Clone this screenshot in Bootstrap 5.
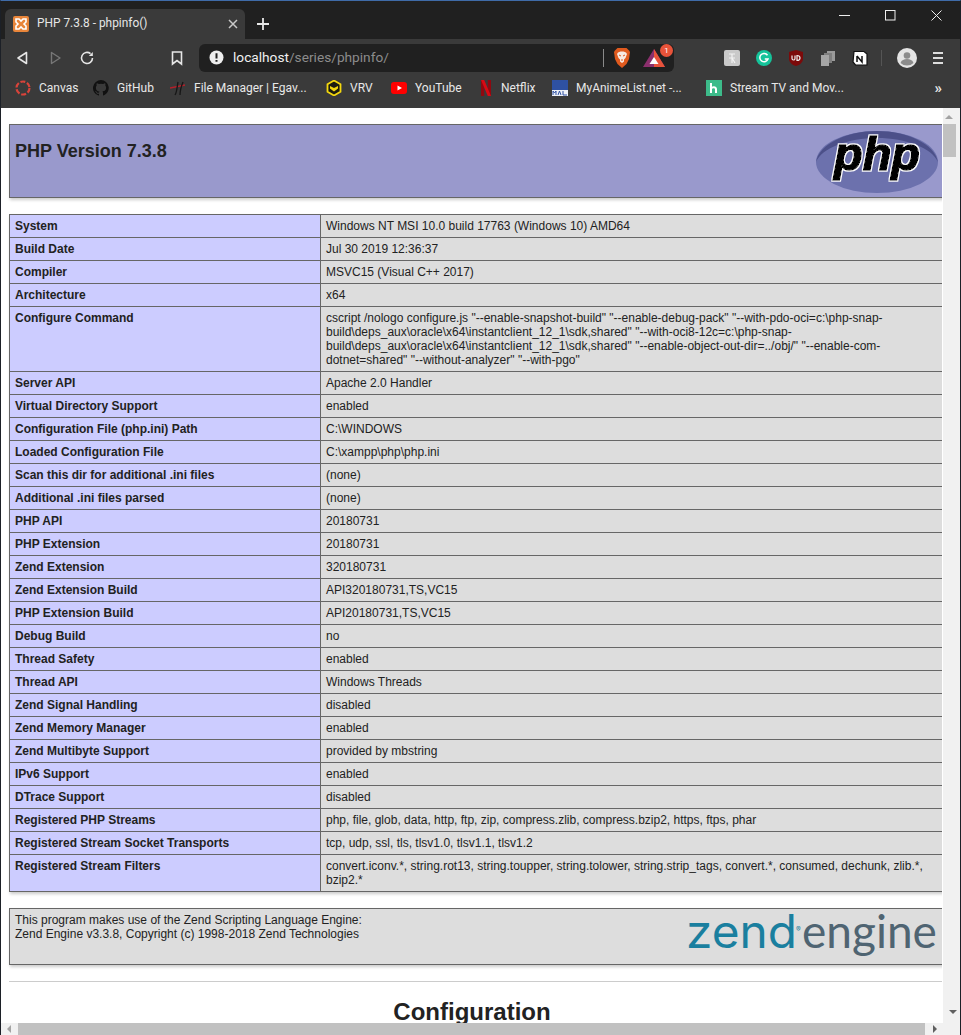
<!DOCTYPE html>
<html lang="en"><head><meta charset="utf-8"><title>PHP 7.3.8 - phpinfo()</title>
<link rel="stylesheet" href="https://cdn.jsdelivr.net/npm/bootstrap@5.3.0/dist/css/bootstrap.min.css">
<style>
html,body{height:1035px;overflow:hidden;margin:0;background:#fff}
.win{height:1035px;width:961px;border-top:1px solid #3f6ba8;border-left:1px solid #1c2027;border-right:1px solid #1c2027;font-family:Roboto,"Open Sans",sans-serif}
.tabstrip{height:38px;background:#202020;padding-left:4px}
.tab{width:240px;height:30px;background:#3a3a3a;border-radius:6px 6px 0 0;padding:0 7px 0 8px;color:#e6e6e6;font-size:11.9px}
.tabtitle{margin-left:8px}
.tabclose{margin-left:auto}
.plus{margin-left:11px;margin-top:8px}
.wctl{margin-left:auto;margin-right:1px;padding-bottom:12px}
.wbtn{width:46px;text-align:center}
.toolbar{height:33px;background:#3a3a3a;padding-top:4px}
.navbtn{width:32px}
.navfirst{margin-left:14px}
.bmk{margin-left:58px;width:16px}
.addr{width:475px;height:28px;margin-left:14px;background:#202020;border-radius:6px;color:#ddd;font-size:13.7px;padding-left:10px;padding-right:6px}
.addr b{font-weight:400;color:#f0f0f0;margin-left:9px}
.addr i{font-style:normal;color:#8c8c8c}
.vsep{width:1px;height:18px;background:#8a8a8a}
.asep{margin-left:auto;margin-right:10px}
.bat{margin-left:13px;margin-right:3px;position:relative;line-height:0}
.dot{position:absolute;top:-4px;right:-8px;width:13px;height:13px;border-radius:50%;background:#e8533a;color:#fff;font-size:8px;line-height:13px;text-align:center}
.exts{margin-left:50px;gap:16px}
.exts2{margin-left:13px;gap:15px}
.tsep{background:#555;height:16px}
.bookmarks{height:36px;background:#3a3a3a;padding-left:14px;color:#e8e8e8;font-size:12px;padding-bottom:4px}
.bm{gap:8px;white-space:nowrap}
.bm:nth-child(1){width:78px}
.bm:nth-child(2){width:77px}
.bm:nth-child(3){width:156px}
.bm:nth-child(4){width:65px}
.bm:nth-child(5){width:88px}
.bm:nth-child(6){width:73px}
.bm:nth-child(7){width:154px}
.more{margin-left:auto;margin-right:18px;font-size:15px;font-weight:700}
.pane{height:927px}
.pagewrap{width:942px;overflow:hidden;padding-top:16px;color:#222;font-family:"Liberation Sans",Arial,sans-serif;font-size:12px;line-height:normal}
.gutter{width:1px;background:#fff}
.vbar{width:17px;background:#f1f1f1;padding-top:7px}
.upa{width:0;height:0;border:4px solid transparent;border-top:0;border-bottom-color:#a3a3a3;margin:0 0 5px 2px}
.thumb{width:13px;height:33px;background:#c1c1c1}
.infotable{width:936px;margin-left:8px;border-collapse:collapse;box-shadow:1px 2px 3px #ccc;margin-bottom:16px;table-layout:fixed}
.infotable td{border:1px solid #666;padding:4px 5px;vertical-align:baseline;font-size:12px;line-height:14px;overflow-wrap:break-word}
.infotable .ecell{width:311px;background:#ccf;font-weight:700}
.infotable .vcell{background:#ddd}
.infotable .hcell{background:#99c;height:73px;vertical-align:top;padding:4px 5px;position:relative}
.infotable .zcell{background:#ddd;height:56px;vertical-align:top;position:relative}
.ptitle{font-size:18px;font-weight:700;line-height:21px;margin:12px 0;color:#222}
.phplogo{position:absolute;right:3px;top:-5px}
.zendlogo{position:absolute;right:8px;top:-11px}
.rule{width:934px;margin:0 0 0 8px;border:0;border-top:1px solid #ccc;opacity:1}
.cfg{width:926px;margin:16px 0 0 8px;text-align:center;font-size:24px;font-weight:700;line-height:28px;color:#222}
.hbar{height:12px;background:#f1f1f1;margin-top:-12px;position:relative;padding-left:17px}
.hthumb{width:907px;height:12px;background:#c1c1c1}
.lefta{position:absolute;left:6px;top:2px;width:0;height:0;border:4px solid transparent;border-left:0;border-right-color:#a3a3a3}
.righta{position:absolute;left:932px;top:2px;width:0;height:0;border:4px solid transparent;border-right:0;border-left-color:#606060}
.downa{position:absolute;left:948px;top:-13px;width:0;height:0;border:4px solid transparent;border-bottom:0;border-top-color:#606060}
</style></head><body>
<div class="win d-flex flex-column">
<div class="tabstrip d-flex align-items-end">
 <div class="tab d-flex align-items-center">
  <svg width="16" height="16" viewBox="0 0 16 16"><rect width="16" height="16" rx="2" fill="#e8853a"/><path d="M3 3h3l2 2 2-2h3v3l-2 2 2 2v3h-3l-2-2-2 2H3v-3l2-2-2-2z" fill="none" stroke="#fff" stroke-width="1.6"/></svg>
  <span class="tabtitle">PHP 7.3.8 - phpinfo()</span>
  <svg class="tabclose" width="10" height="10" viewBox="0 0 10 10"><path d="M1 1l8 8M9 1l-8 8" stroke="#c8c8c8" stroke-width="1.5"/></svg>
 </div>
 <svg class="plus align-self-center" width="14" height="14" viewBox="0 0 14 14"><path d="M7 1v12M1 7h12" stroke="#e8e8e8" stroke-width="1.8"/></svg>
 <div class="wctl d-flex align-self-end">
  <div class="wbtn"><svg width="11" height="11" viewBox="0 0 11 11"><path d="M0 5.500h11" stroke="#eee"/></svg></div>
  <div class="wbtn"><svg width="11" height="11" viewBox="0 0 11 11"><rect x=".5" y=".5" width="9.500" height="9.500" fill="none" stroke="#eee"/></svg></div>
  <div class="wbtn"><svg width="11" height="11" viewBox="0 0 11 11"><path d="M.5.5l10 10M10.500.5l-10 10" stroke="#eee"/></svg></div>
 </div>
</div>
<div class="toolbar d-flex align-items-center">
 <div class="navbtn navfirst"><svg width="16" height="16" viewBox="0 0 16 16"><path d="M11.500 2.500v11L3 8z" fill="none" stroke="#e6e6e6" stroke-width="1.600" stroke-linejoin="round"/></svg></div>
 <div class="navbtn"><svg width="16" height="16" viewBox="0 0 16 16"><path d="M4.500 2.500v11L13 8z" fill="none" stroke="#777" stroke-width="1.400" stroke-linejoin="round"/></svg></div>
 <div class="navbtn"><svg width="16" height="16" viewBox="0 0 16 16"><path d="M13.500 8a5.500 5.500 0 1 1-2-4.300" fill="none" stroke="#e6e6e6" stroke-width="1.600"/><path d="M13.800 2v4h-4z" fill="#e6e6e6"/></svg></div>
 <div class="bmk"><svg width="16" height="16" viewBox="0 0 16 16"><path d="M3.500 2h9v12L8 10.500 3.500 14z" fill="none" stroke="#e6e6e6" stroke-width="1.600"/></svg></div>
 <div class="addr d-flex align-items-center">
  <svg width="15" height="15" viewBox="0 0 15 15"><circle cx="7.500" cy="7.500" r="7" fill="#eee"/><path d="M7.500 3.200v5.200M7.500 10v1.800" stroke="#202020" stroke-width="2"/></svg>
  <span><b>localhost</b><i>/series/phpinfo/</i></span>
  <span class="vsep asep"></span>
  <svg width="16" height="20" viewBox="0 0 16 20"><path d="M3.500 0h9L15 2.500l1 1.500-1 7-2.500 5L8 20l-4.500-4L1 11 0 4l1-1.500z" fill="#e05a1e"/><path d="M4 4.500L6.500 3.500h3L12 4.500l1 1.500-1.500 4L10 11.500v2L8 15l-2-1.500v-2L4.500 10 3 6z" fill="#f6e9e2"/><path d="M5 7l2 1M11 7L9 8M7 12h2" stroke="#e05a1e" stroke-width="1"/></svg>
  <span class="bat"><svg width="22" height="19" viewBox="0 0 22 19"><path d="M11 1L22 19H0z" fill="#8c2f6d"/><path d="M11 1L22 19H11z" fill="#e8533a"/><path d="M11 9l4.500 7h-9z" fill="#fff"/></svg><span class="dot">1</span></span>
 </div>
 <div class="exts d-flex align-items-center">
  <svg width="16" height="16" viewBox="0 0 16 16"><rect width="16" height="16" rx="2" fill="#c9c9c9"/><path d="M5 4h6M8 4v9M8 8l3 5M5 8h6" stroke="#f2f2f2" stroke-width="1.200" fill="none"/></svg>
  <svg width="16" height="16" viewBox="0 0 16 16"><circle cx="8" cy="8" r="8" fill="#15c39a"/><path d="M11.500 5.200A4.200 4.200 0 1 0 12 9H8.800" fill="none" stroke="#fff" stroke-width="1.500"/></svg>
  <svg width="16" height="16" viewBox="0 0 16 16"><path d="M8 0l7 2v7c0 3-3 6-7 7-4-1-7-4-7-7V2z" fill="#7c0a0a"/><path d="M4 5.500v3a1.500 1.500 0 0 0 3 0v-3M9 5.500v5c4 0 4-5 0-5z" fill="none" stroke="#eee" stroke-width="1.200"/></svg>
  <svg width="16" height="16" viewBox="0 0 16 16"><rect x="7" y="1" width="8" height="10" fill="#9a9a9a"/><rect x="4" y="3" width="8" height="10" fill="#7f7f7f"/><rect x="1" y="5" width="8" height="11" fill="#a5a5a5"/></svg>
  <svg width="16" height="16" viewBox="0 0 16 16"><path d="M2 1.500h10l3 2.500v11H3.500L1 12z" fill="#fff" stroke="#111" stroke-width="1.200"/><path d="M5 6v6M5 6l5 6V6" fill="none" stroke="#111" stroke-width="1.500"/></svg>
 </div>
 <div class="exts2 d-flex align-items-center">
  <span class="vsep tsep"></span>
  <svg width="20" height="20" viewBox="0 0 20 20"><circle cx="10" cy="10" r="10" fill="#e4e4e4"/><circle cx="10" cy="7.500" r="3.300" fill="#8b8b8b"/><path d="M3.500 15c1-3 3.500-4 6.500-4s5.500 1 6.500 4a9.500 9.500 0 0 1-13 0z" fill="#8b8b8b"/></svg>
  <svg width="12" height="14" viewBox="0 0 12 14"><path d="M1 2h10M1 7h10M1 12h10" stroke="#dcdcdc" stroke-width="1.800"/></svg>
 </div>
</div>
<div class="bookmarks d-flex align-items-center">
 <span class="bm d-flex align-items-center"><svg width="16" height="16" viewBox="0 0 16 16"><circle cx="8" cy="8" r="6.500" fill="none" stroke="#d9433a" stroke-width="2.200" stroke-dasharray="5 1.800"/></svg>Canvas</span>
 <span class="bm d-flex align-items-center"><svg width="16" height="16" viewBox="0 0 16 16"><path d="M8 0a8 8 0 0 0-2.500 15.600c.4.100.5-.2.500-.4v-1.400c-2.200.5-2.700-1-2.700-1-.4-.9-.9-1.200-.9-1.200-.7-.5.100-.5.100-.5.800.100 1.200.8 1.200.8.700 1.200 1.900.9 2.300.7.100-.5.300-.9.500-1.100-1.800-.2-3.600-.9-3.600-4 0-.9.300-1.600.8-2.100-.1-.2-.4-1 .1-2.100 0 0 .7-.2 2.200.8a7.600 7.600 0 0 1 4 0c1.500-1 2.200-.8 2.200-.8.400 1.100.2 1.900.1 2.100.5.600.8 1.300.8 2.100 0 3.100-1.900 3.700-3.700 3.900.3.300.6.800.6 1.500v2.200c0 .2.100.5.500.4A8 8 0 0 0 8 0z" fill="#111"/></svg>GitHub</span>
 <span class="bm d-flex align-items-center"><svg width="16" height="16" viewBox="0 0 16 16"><path d="M0 8l15-3" fill="none" stroke="#b3202a" stroke-width="1.300"/><path d="M5 15c2-3 2-8 3-13M10 15c0-4 1-8 3-13" fill="none" stroke="#161616" stroke-width="1.300"/></svg>File Manager | Egav...</span>
 <span class="bm d-flex align-items-center"><svg width="16" height="16" viewBox="0 0 16 16"><path d="M8 .5l6.500 3.700v7.600L8 15.500l-6.500-3.700V4.200z" fill="#1c1c10" stroke="#f4d80e" stroke-width="1.800"/><path d="M4 6l4 2 4-2v2.500l-4 3-4-3z" fill="#f4d80e"/></svg>VRV</span>
 <span class="bm d-flex align-items-center"><svg width="16" height="16" viewBox="0 0 16 16"><rect y="2" width="16" height="12" rx="3" fill="#f00"/><path d="M6.500 5.500v5L11 8z" fill="#fff"/></svg>YouTube</span>
 <span class="bm d-flex align-items-center"><svg width="14" height="16" viewBox="0 0 14 16"><path d="M2 0h3.200v16H2zM8.800 0H12v16H8.800z" fill="#8f0810"/><path d="M2 0h3.200L12 16H8.800z" fill="#d80a14"/></svg>Netflix</span>
 <span class="bm d-flex align-items-center"><svg width="16" height="16" viewBox="0 0 16 16"><rect width="16" height="16" fill="#2e51a2"/><rect y="10" width="16" height="6" fill="#eef1f8"/><path d="M1 15v-4l1.500 2 1.500-2v4M6 15l1.500-4L9 15M11 11v4h4" fill="none" stroke="#2e51a2"/></svg>MyAnimeList.net -...</span>
 <span class="bm d-flex align-items-center"><svg width="16" height="16" viewBox="0 0 16 16"><rect width="16" height="16" fill="#3dbb8a"/><path d="M5 3v10M5 8.500c1-1.500 5-2 5 1V13" fill="none" stroke="#fff" stroke-width="2"/></svg>Stream TV and Mov...</span>
 <span class="more">»</span>
</div>
<div class="pane d-flex">
 <div class="pagewrap">
<table class="infotable"><tr><td class="hcell"><div class="ptitle">PHP Version 7.3.8</div><svg class="phplogo" width="128" height="76" viewBox="0 -10 128 76"><defs><filter id="halo" x="-10%" y="-10%" width="120%" height="120%"><feMorphology in="SourceAlpha" operator="dilate" radius="1" result="d"/><feFlood flood-color="#fff"/><feComposite in2="d" operator="in" result="w"/><feMerge><feMergeNode in="w"/><feMergeNode in="SourceGraphic"/></feMerge></filter></defs><ellipse cx="64" cy="32" rx="61" ry="31" fill="#6c71ad"/><path d="M3 32C6 14 34 1 64 1c30 0 58 13 61 31-6-14-32-24-61-24S9 18 3 32z" fill="#4c5089"/><text x="21" y="40" font-family="Liberation Sans" font-style="italic" font-weight="700" font-size="46" fill="#000" stroke="#000" stroke-width="1.400" textLength="86" lengthAdjust="spacingAndGlyphs" filter="url(#halo)">php</text></svg></td></tr></table>
<table class="infotable">
<tr><td class="ecell">System</td><td class="vcell">Windows NT MSI 10.0 build 17763 (Windows 10) AMD64</td></tr>
<tr><td class="ecell">Build Date</td><td class="vcell">Jul 30 2019 12:36:37</td></tr>
<tr><td class="ecell">Compiler</td><td class="vcell">MSVC15 (Visual C++ 2017)</td></tr>
<tr><td class="ecell">Architecture</td><td class="vcell">x64</td></tr>
<tr><td class="ecell">Configure Command</td><td class="vcell">cscript /nologo configure.js  &quot;--enable-snapshot-build&quot; &quot;--enable-debug-pack&quot; &quot;--with-pdo-oci=c:\php-snap-build\deps_aux\oracle\x64\instantclient_12_1\sdk,shared&quot; &quot;--with-oci8-12c=c:\php-snap-build\deps_aux\oracle\x64\instantclient_12_1\sdk,shared&quot; &quot;--enable-object-out-dir=../obj/&quot; &quot;--enable-com-dotnet=shared&quot; &quot;--without-analyzer&quot; &quot;--with-pgo&quot;</td></tr>
<tr><td class="ecell">Server API</td><td class="vcell">Apache 2.0 Handler</td></tr>
<tr><td class="ecell">Virtual Directory Support</td><td class="vcell">enabled</td></tr>
<tr><td class="ecell">Configuration File (php.ini) Path</td><td class="vcell">C:\WINDOWS</td></tr>
<tr><td class="ecell">Loaded Configuration File</td><td class="vcell">C:\xampp\php\php.ini</td></tr>
<tr><td class="ecell">Scan this dir for additional .ini files</td><td class="vcell">(none)</td></tr>
<tr><td class="ecell">Additional .ini files parsed</td><td class="vcell">(none)</td></tr>
<tr><td class="ecell">PHP API</td><td class="vcell">20180731</td></tr>
<tr><td class="ecell">PHP Extension</td><td class="vcell">20180731</td></tr>
<tr><td class="ecell">Zend Extension</td><td class="vcell">320180731</td></tr>
<tr><td class="ecell">Zend Extension Build</td><td class="vcell">API320180731,TS,VC15</td></tr>
<tr><td class="ecell">PHP Extension Build</td><td class="vcell">API20180731,TS,VC15</td></tr>
<tr><td class="ecell">Debug Build</td><td class="vcell">no</td></tr>
<tr><td class="ecell">Thread Safety</td><td class="vcell">enabled</td></tr>
<tr><td class="ecell">Thread API</td><td class="vcell">Windows Threads</td></tr>
<tr><td class="ecell">Zend Signal Handling</td><td class="vcell">disabled</td></tr>
<tr><td class="ecell">Zend Memory Manager</td><td class="vcell">enabled</td></tr>
<tr><td class="ecell">Zend Multibyte Support</td><td class="vcell">provided by mbstring</td></tr>
<tr><td class="ecell">IPv6 Support</td><td class="vcell">enabled</td></tr>
<tr><td class="ecell">DTrace Support</td><td class="vcell">disabled</td></tr>
<tr><td class="ecell">Registered PHP Streams</td><td class="vcell">php, file, glob, data, http, ftp, zip, compress.zlib, compress.bzip2, https, ftps, phar</td></tr>
<tr><td class="ecell">Registered Stream Socket Transports</td><td class="vcell">tcp, udp, ssl, tls, tlsv1.0, tlsv1.1, tlsv1.2</td></tr>
<tr><td class="ecell">Registered Stream Filters</td><td class="vcell">convert.iconv.*, string.rot13, string.toupper, string.tolower, string.strip_tags, convert.*, consumed, dechunk, zlib.*, bzip2.*</td></tr>
</table>
<table class="infotable"><tr><td class="zcell">This program makes use of the Zend Scripting Language Engine:<br>Zend Engine v3.3.8, Copyright (c) 1998-2018 Zend Technologies<svg class="zendlogo" width="254" height="70" viewBox="0 0 254 70"><text x="4" y="50" font-family="Inter,sans-serif" font-size="46" font-weight="400" fill="#1a7f9f" textLength="111" lengthAdjust="spacingAndGlyphs">zend</text><text x="114" y="34" font-family="Inter,sans-serif" font-size="7" fill="#1a7f9f">®</text><text x="120" y="50" font-family="Lato,sans-serif" font-size="46" font-weight="400" fill="#4f6472">engine</text></svg></td></tr></table>
<hr class="rule">
<div class="cfg">Configuration</div>
 </div>
 <div class="gutter"></div>
 <div class="vbar"><div class="upa"></div><div class="thumb"></div></div>
</div>
<div class="hbar"><div class="lefta"></div><div class="hthumb"></div><div class="righta"></div><div class="downa"></div></div>
</div>
<script src="https://cdn.jsdelivr.net/npm/bootstrap@5.3.0/dist/js/bootstrap.bundle.min.js"></script>
</body></html>
